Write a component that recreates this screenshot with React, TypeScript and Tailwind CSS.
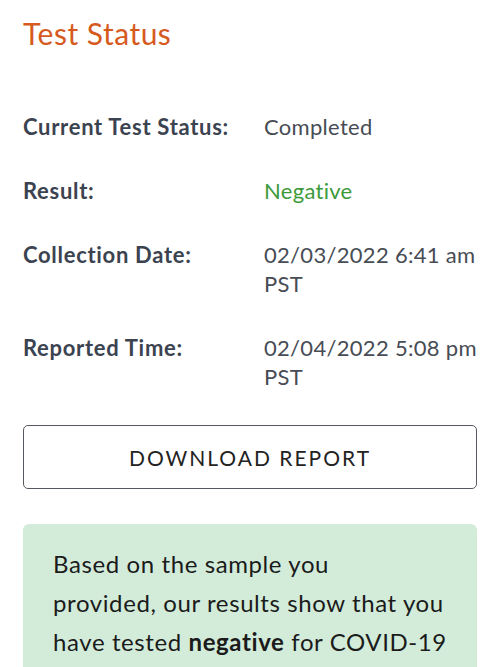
export default function App() {
    const rows = [
        { label: 'Current Test Status:', lines: ['Completed'], tone: 'text-[#474c55]' },
        { label: 'Result:', lines: ['Negative'], tone: 'text-[#3d9a3a]' },
        { label: 'Collection Date:', lines: ['02/03/2022 6:41 am', 'PST'], tone: 'text-[#474c55]' },
        { label: 'Reported Time:', lines: ['02/04/2022 5:08 pm', 'PST'], tone: 'text-[#474c55]' },
    ]

    return (
        <div className="min-h-screen bg-white px-[23px] pt-[15px] font-['Lato','Liberation_Sans',sans-serif]">
            {/* 标题 */}
            <h1 className="text-[30px] leading-[36px] tracking-[0.5px] text-[#d65a1e]">Test Status</h1>

            {/* 状态列表 */}
            <div className="mt-[61px] flex flex-col gap-[35px]">
                {rows.map((row) => (
                    <div key={row.label} className="grid grid-cols-[241px_1fr] text-[22px] leading-[29px]">
                        <span className="font-bold tracking-[0.7px] text-[#3c4350]">{row.label}</span>
                        <span className={`flex flex-col tracking-[0.3px] ${row.tone}`}>
                            {row.lines.map((line) => (
                                <span key={line} className="whitespace-nowrap">
                                    {line}
                                </span>
                            ))}
                        </span>
                    </div>
                ))}
            </div>

            <button className="mt-[34px] flex h-[64px] w-full items-center justify-center rounded-[5px] border-[1.5px] border-[#555a60] bg-white pt-[2px] text-[21px] tracking-[2px] text-[#222]">
                DOWNLOAD REPORT
            </button>

            {/* 结果说明 */}
            <div className="mt-[35px] rounded-[6px] bg-[#d3ecda] px-[30px] pt-[20px] pb-[24px] text-[24px] leading-[39px] tracking-[0.6px] text-[#1b1b1b]">
                <span className="block whitespace-nowrap">Based on the sample you</span>
                <span className="block whitespace-nowrap">provided, our results show that you</span>
                <span className="block whitespace-nowrap">
                    have tested <span className="font-bold">negative</span> for COVID-19
                </span>
                <span className="block whitespace-nowrap">at the time of collection.</span>
            </div>
        </div>
    )
}
